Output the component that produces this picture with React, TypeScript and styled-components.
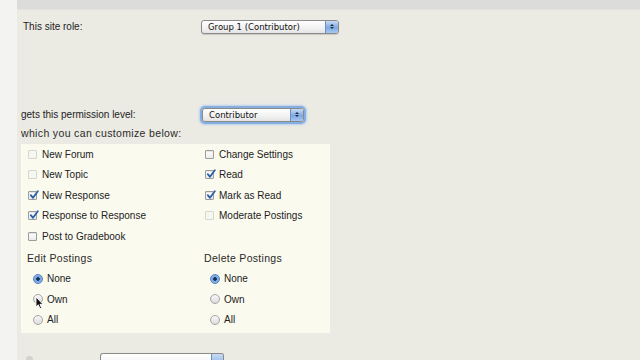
import { Fragment } from 'react';
import styled, { createGlobalStyle } from 'styled-components';

const GlobalStyle = createGlobalStyle`
  html, body { margin: 0; padding: 0; }
  body {
    width: 640px;
    height: 360px;
    overflow: hidden;
    background: #f3f3f1;
    font-family: "Liberation Sans", Arial, sans-serif;
    color: #222;
  }
`;

const Page = styled.div`
  display: flex;
  width: 640px;
  height: 360px;
  overflow: hidden;
`;

const LeftStrip = styled.div`
  width: 17px;
  flex-shrink: 0;
  background: #f3f3f1;
`;

const Main = styled.div`
  flex: 1;
  display: flex;
  flex-direction: column;
  background: #ebeae3;
  min-height: 0;
`;

const TopBar = styled.div`
  height: 9px;
  flex-shrink: 0;
  background: #dcdcda;
  border-bottom: 1px solid #e2e2df;
`;

const Content = styled.div`
  padding: 9px 0 0 4px;
  display: flex;
  flex-direction: column;
  flex-shrink: 0;
`;

const FieldRow = styled.div<{ $indent?: number; $labelWidth: number; $mt?: number }>`
  display: flex;
  align-items: center;
  margin-top: ${p => p.$mt ?? 0}px;
  padding-left: ${p => p.$indent ?? 0}px;
  height: 15px;
  & > span {
    width: ${p => p.$labelWidth}px;
    font-size: 10px;
    flex-shrink: 0;
  }
`;

const Select = styled.div<{ $width: number; $focus?: boolean }>`
  position: relative;
  width: ${p => p.$width}px;
  height: 14px;
  box-sizing: border-box;
  border: 1px solid #8a8a8a;
  border-radius: 3px;
  background: linear-gradient(#ffffff, #f1f1f1 60%, #e4e4e4);
  font-family: "DejaVu Sans", "Liberation Sans", sans-serif;
  font-size: 8.5px;
  line-height: 12px;
  padding-left: 6px;
  color: #111;
  box-shadow: ${p => (p.$focus ? '0 0 0 2px #86aee0, 0 0 2px 3px #b8d0ee' : '0 1px 1px rgba(0,0,0,0.15)')};
`;

const SelectButton = styled.div`
  position: absolute;
  right: 0;
  top: 0;
  bottom: 0;
  width: 12px;
  border-radius: 0 2px 2px 0;
  background: linear-gradient(#c7dcf5, #7ea9e1 55%, #a8c8f0);
  border-left: 1px solid #6b8fc0;
  display: flex;
  flex-direction: column;
  align-items: center;
  justify-content: center;
  gap: 1px;
`;

const Arrow = styled.div<{ $down?: boolean }>`
  width: 0;
  height: 0;
  border-left: 2px solid transparent;
  border-right: 2px solid transparent;
  ${p => (p.$down ? 'border-top: 2px solid #1e2f4a;' : 'border-bottom: 2px solid #1e2f4a;')}
`;

const Caption = styled.div`
  margin-top: 5px;
  font-size: 10.5px;
  letter-spacing: 0.35px;
  color: #2a2a2a;
  height: 13px;
  line-height: 13px;
`;

const Box = styled.div`
  position: relative;
  margin-top: 4px;
  width: 309px;
  height: 189px;
  box-sizing: border-box;
  background: #fbfaef;
  padding: 0 0 3px 7px;
  display: grid;
  grid-template-columns: 177px 1fr;
  grid-auto-rows: 20.5px;
  align-items: center;
`;

const CheckRow = styled.label`
  display: flex;
  align-items: center;
  gap: 5px;
  font-size: 10px;
  color: #222;
`;

const CheckBox = styled.span<{ $dim?: boolean }>`
  position: relative;
  width: 9px;
  height: 9px;
  box-sizing: border-box;
  border: 1px solid ${p => (p.$dim ? '#d6d6d0' : '#9c9c9c')};
  border-radius: 1px;
  background: ${p => (p.$dim ? '#f7f7f2' : 'linear-gradient(#ffffff, #ececec)')};
  box-shadow: ${p => (p.$dim ? 'none' : 'inset 0 1px 1px rgba(0,0,0,0.1)')};
  flex-shrink: 0;
`;

const Tick = styled.svg`
  position: absolute;
  left: 0;
  top: -2px;
  width: 10px;
  height: 10px;
`;

const RadioSection = styled.div`
  grid-column: 1 / span 2;
  grid-row: span 4;
  align-self: start;
  display: grid;
  grid-template-columns: 177px 1fr;
`;

const GroupCell = styled.div`
  display: flex;
  flex-direction: column;
`;

const GroupHead = styled.div`
  font-size: 10.5px;
  letter-spacing: 0.3px;
  color: #2a2a2a;
  height: 22px;
  line-height: 22px;
  margin-left: -1px;
`;

const RadioRow = styled.label`
  display: flex;
  align-items: center;
  gap: 4px;
  height: 20.5px;
  padding-left: 5px;
  font-size: 10px;
  color: #222;
`;

const Radio = styled.span<{ $on?: boolean }>`
  width: 10px;
  height: 10px;
  box-sizing: border-box;
  border-radius: 50%;
  flex-shrink: 0;
  border: 1px solid ${p => (p.$on ? '#4f7fbf' : '#a5a5a5')};
  background: ${p =>
    p.$on
      ? 'radial-gradient(circle, #1c2f55 0 1.5px, #6fa0e0 2px, #a9c9f2 100%)'
      : 'linear-gradient(#f8f8f8, #dcdcdc)'};
`;

const Cursor = styled.svg`
  position: absolute;
  left: 14px;
  top: 152px;
  width: 9px;
  height: 14px;
`;

const BottomRow = styled.div`
  display: flex;
  align-items: flex-start;
  margin-top: 20px;
  height: 12px;
  padding-left: 5px;
`;

const BottomDot = styled.span`
  width: 7px;
  height: 6px;
  margin-top: 3px;
  border-radius: 50%;
  background: #d4d4cf;
`;

const BottomSelect = styled.div`
  margin-left: 67px;
  width: 124px;
  height: 12px;
  box-sizing: border-box;
  border: 1px solid #8a8a8a;
  border-bottom: none;
  border-radius: 3px 3px 0 0;
  background: linear-gradient(#ffffff, #f2f2f2);
  position: relative;
`;

const BottomButton = styled.div`
  position: absolute;
  right: 0;
  top: 0;
  bottom: 0;
  width: 11px;
  background: linear-gradient(#c7dcf5, #8db4e6);
  border-left: 1px solid #6b8fc0;
  border-radius: 0 2px 0 0;
`;

type Item = { label: string; checked?: boolean; dim?: boolean };

const leftItems: Item[] = [
  { label: 'New Forum', dim: true },
  { label: 'New Topic', dim: true },
  { label: 'New Response', checked: true },
  { label: 'Response to Response', checked: true },
  { label: 'Post to Gradebook' },
];

const rightItems: Item[] = [
  { label: 'Change Settings' },
  { label: 'Read', checked: true },
  { label: 'Mark as Read', checked: true },
  { label: 'Moderate Postings', dim: true },
];

const Check = ({ item }: { item: Item }) => (
  <CheckRow>
    <CheckBox $dim={item.dim}>
      {item.checked && (
        <Tick viewBox="0 0 10 10">
          <path d="M1.8 5.2 L4 7.8 L8.8 1.2" fill="none" stroke="#2d5fa8" strokeWidth="1.8" strokeLinecap="round" strokeLinejoin="round" />
        </Tick>
      )}
    </CheckBox>
    {item.label}
  </CheckRow>
);

const RadioGroup = ({ title }: { title: string }) => (
  <GroupCell>
    <GroupHead>{title}</GroupHead>
    {['None', 'Own', 'All'].map((opt, i) => (
      <RadioRow key={opt}>
        <Radio $on={i === 0} />
        {opt}
      </RadioRow>
    ))}
  </GroupCell>
);

const SelectBox = ({ value, width, focus }: { value: string; width: number; focus?: boolean }) => (
  <Select $width={width} $focus={focus}>
    {value}
    <SelectButton>
      <Arrow />
      <Arrow $down />
    </SelectButton>
  </Select>
);

export default function App() {
  return (
    <>
      <GlobalStyle />
      <Page>
        <LeftStrip />
        <Main>
          <TopBar />
          <Content>
            <FieldRow $indent={2} $labelWidth={178}>
              <span>This site role:</span>
              <SelectBox value="Group 1 (Contributor)" width={138} />
            </FieldRow>
            <FieldRow $labelWidth={181} $mt={73}>
              <span>gets this permission level:</span>
              <SelectBox value="Contributor" width={102} focus />
            </FieldRow>
            <Caption>which you can customize below:</Caption>
            <Box>
              {leftItems.map((item, i) => (
                <Fragment key={item.label}>
                  <Check item={item} />
                  {rightItems[i] ? <Check item={rightItems[i]} /> : <div />}
                </Fragment>
              ))}
              <RadioSection>
                <RadioGroup title="Edit Postings" />
                <RadioGroup title="Delete Postings" />
              </RadioSection>
              <Cursor viewBox="0 0 9 14">
                <path d="M1 1 L1 11 L3.3 8.8 L5 12.8 L6.6 12.1 L5 8.3 L8 8.3 Z" fill="#111" stroke="#fff" strokeWidth="0.9" strokeLinejoin="round" />
              </Cursor>
            </Box>
            <BottomRow>
              <BottomDot />
              <BottomSelect>
                <BottomButton />
              </BottomSelect>
            </BottomRow>
          </Content>
        </Main>
      </Page>
    </>
  );
}
